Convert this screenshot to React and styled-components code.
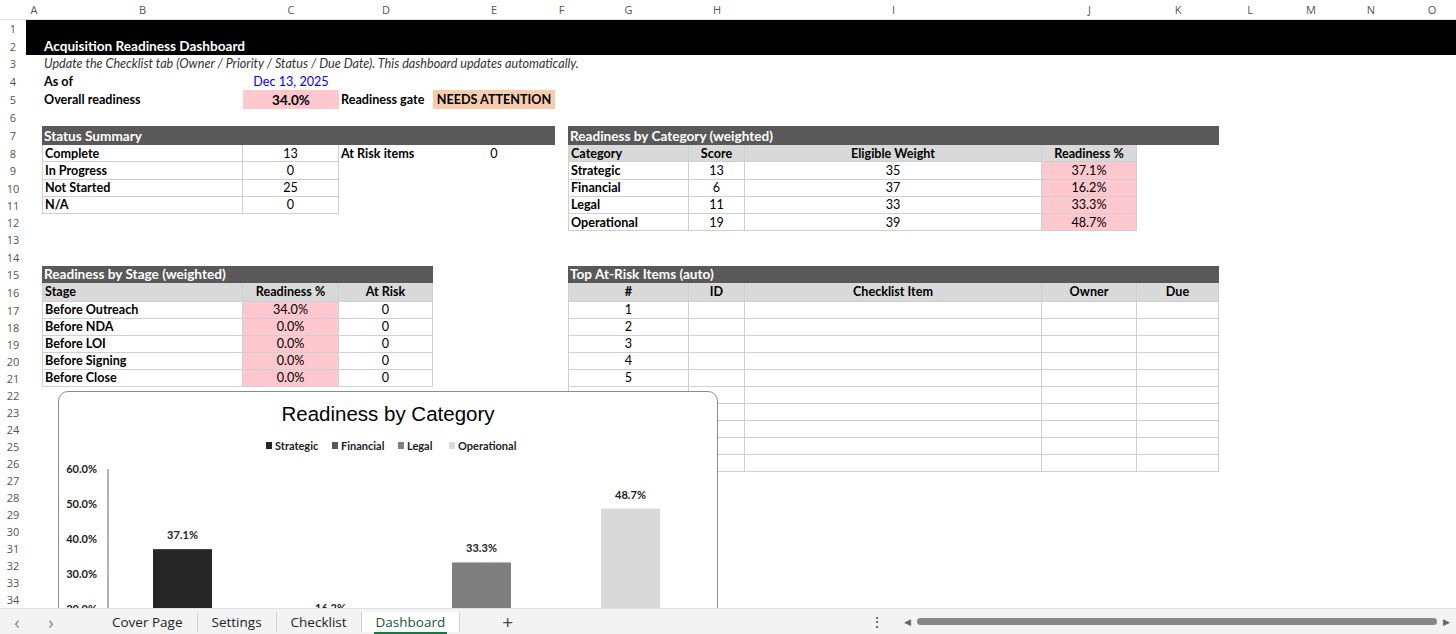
import React from "react";
import styled, { createGlobalStyle, css } from "styled-components";

const Global = createGlobalStyle`
  html, body { margin: 0; padding: 0; background: #fff; overflow: hidden; }
  body { font-family: Lato, "Open Sans", "Liberation Sans", sans-serif; }
`;

const COLS = [26, 16, 201, 96, 94, 122, 13, 121, 56, 297, 95, 82, 62, 60, 60, 62];
const ROWS = [20, 17.5, 17.5, 17.5, 17.5, 19, 17, 19, 17.25, 17.25, 17.25, 17.25, 17.25, 17.25, 17.25, 17.25, 18.5];
for (let i = 17; i <= 34; i++) ROWS.push(17);
const CI = { A: 2, B: 3, C: 4, D: 5, E: 6, F: 7, G: 8, H: 9, I: 10, J: 11, K: 12, L: 13, M: 14, N: 15, O: 16 };

const Page = styled.div`
  width: 1456px;
  height: 634px;
  display: flex;
  flex-direction: column;
  overflow: hidden;
`;
const SheetArea = styled.div`
  position: relative;
  height: 608px;
  overflow: hidden;
`;
const Grid = styled.div`
  display: grid;
  grid-template-columns: ${COLS.map((c) => c + "px").join(" ")};
  grid-template-rows: ${ROWS.map((r) => r + "px").join(" ")};
  font-size: 12.6px;
  color: #000;
`;

const Cell = styled.div`
  grid-column: ${(p) => p.$c} / span ${(p) => p.$span || 1};
  grid-row: ${(p) => p.$r};
  display: flex;
  align-items: center;
  justify-content: ${(p) => (p.$center ? "center" : "flex-start")};
  padding: 0 2px;
  white-space: nowrap;
  overflow: visible;
  font-weight: ${(p) => (p.$bold ? 700 : 400)};
  box-sizing: border-box;
  ${(p) => p.$italic && css`font-style: italic; color: #333;`}
  ${(p) => p.$color && css`color: ${p.$color};`}
  ${(p) => p.$big && css`font-size: 13.5px;`}
  ${(p) => p.$box && css`
    border-right: 1px solid #d0d0d0;
    border-bottom: 1px solid #d0d0d0;
  `}
  ${(p) => p.$first && css`border-left: 1px solid #d0d0d0;`}
  ${(p) => p.$bg && css`background: ${p.$bg};`}
`;
const ColHead = styled.div`
  grid-row: 1;
  grid-column: ${(p) => p.$c};
  display: flex;
  align-items: center;
  justify-content: center;
  color: #555;
  font-size: 11px;
  font-family: "Open Sans", sans-serif;
  border-bottom: 1px solid #e2e2e2;
  background: #fff;
`;
const RowHead = styled.div`
  grid-column: 1;
  grid-row: ${(p) => p.$r};
  display: flex;
  align-items: center;
  justify-content: center;
  color: #555;
  font-size: 11px;
  font-family: "Open Sans", sans-serif;
`;
const Band = styled.div`
  grid-column: 2 / -1;
  grid-row: 2 / span 2;
  background: #000;
`;
const Title = styled.div`
  grid-column: 3 / span 5;
  grid-row: 3;
  color: #fff;
  font-weight: 700;
  font-size: 13.6px;
  display: flex;
  align-items: center;
  padding-left: 2px;
  z-index: 1;
`;
const Section = styled.div`
  grid-column: ${(p) => p.$c} / span ${(p) => p.$span};
  grid-row: ${(p) => p.$r};
  background: #595959;
  color: #fff;
  font-weight: 700;
  font-size: 13.6px;
  display: flex;
  align-items: center;
  padding-left: 2px;
`;

const ChartBox = styled.div`
  position: absolute;
  left: 58px;
  top: 391px;
  width: 660px;
  height: 260px;
  background: #fff;
  border: 1px solid #8c8c8c;
  border-radius: 10px;
  box-sizing: border-box;
  overflow: hidden;
`;

const TabBar = styled.div`
  height: 26px;
  background: #f3f3f3;
  border-top: 1px solid #e0e0e0;
  display: flex;
  align-items: center;
  font-family: "Open Sans", sans-serif;
  font-size: 13.5px;
  color: #222;
  box-sizing: border-box;
`;
const Arrow = styled.span`
  color: #888;
  font-size: 18px;
  width: 34px;
  text-align: center;
`;
const Tab = styled.div`
  position: relative;
  padding: 0 14px;
  height: 20px;
  display: flex;
  align-items: center;
  border-right: 1px solid #d0d0d0;
  ${(p) => p.$active && css`
    background: #fff;
    color: #0f5c2e;
    &::after {
      content: "";
      position: absolute;
      left: 12px; right: 12px; bottom: -2px;
      height: 2px;
      background: #107c41;
    }
  `}
`;
const Plus = styled.span`
  margin-left: 42px;
  font-size: 19px;
  color: #444;
`;
const Right = styled.div`
  margin-left: auto;
  display: flex;
  align-items: center;
  gap: 6px;
  padding-right: 6px;
`;
const Dots = styled.span`
  color: #444;
  margin-right: 14px;
  font-size: 14px;
`;
const Track = styled.div`
  width: 520px;
  height: 8px;
  display: flex;
  align-items: center;
`;
const Thumb = styled.div`
  width: 100%;
  height: 7px;
  background: #878787;
  border-radius: 4px;
`;
const Tri = styled.span`
  color: #666;
  font-size: 9px;
`;

const cats = [
  ["Strategic", 13, 35, "37.1%"],
  ["Financial", 6, 37, "16.2%"],
  ["Legal", 11, 33, "33.3%"],
  ["Operational", 19, 39, "48.7%"],
];
const stages = ["Before Outreach", "Before NDA", "Before LOI", "Before Signing", "Before Close"];
const PINK = "#ffc7ce";
const GRAY = "#d9d9d9";
const r = (n) => n + 1;

function Chart() {
  const y0 = 77, step = 35;
  const yOf = (v) => y0 + (60 - v) * step / 10;
  const bars = [
    { x: 94, v: 37.1, c: "#262626" },
    { x: 242, v: 16.2, c: "#595959" },
    { x: 393, v: 33.3, c: "#7f7f7f" },
    { x: 542, v: 48.7, c: "#d9d9d9" },
  ];
  const legend = [
    { x: 207, t: "Strategic", c: "#262626" },
    { x: 273, t: "Financial", c: "#595959" },
    { x: 339, t: "Legal", c: "#7f7f7f" },
    { x: 390, t: "Operational", c: "#d9d9d9" },
  ];
  return (
    <ChartBox>
      <svg width="660" height="260" style={{ display: "block" }}>
        <text x="329" y="29" textAnchor="middle" fontFamily="Liberation Sans, Arial, sans-serif" fontSize="20.5" fill="#000">Readiness by Category</text>
        {legend.map((l) => (
          <g key={l.t}>
            <rect x={l.x} y={50} width="6" height="7" fill={l.c} />
            <text x={l.x + 9} y={57.5} fontFamily="Lato, sans-serif" fontWeight="700" fontSize="11" fill="#222">{l.t}</text>
          </g>
        ))}
        {[60, 50, 40, 30, 20].map((v) => (
          <text key={v} x="38" y={yOf(v) + 4} textAnchor="end" fontFamily="Lato, sans-serif" fontWeight="700" fontSize="11" fill="#222">{v.toFixed(1)}%</text>
        ))}
        <line x1="49" y1={y0} x2="49" y2="260" stroke="#7f7f7f" strokeWidth="1.2" />
        {bars.map((b) => (
          <g key={b.x}>
            <rect x={b.x} y={yOf(b.v)} width="59" height="200" fill={b.c} />
            <text x={b.x + 29.5} y={yOf(b.v) - 10} textAnchor="middle" fontFamily="Lato, sans-serif" fontWeight="700" fontSize="11" fill="#222">{b.v.toFixed(1)}%</text>
          </g>
        ))}
      </svg>
    </ChartBox>
  );
}

export default function App() {
  const letters = ["A", "B", "C", "D", "E", "F", "G", "H", "I", "J", "K", "L", "M", "N", "O"];
  return (
    <Page>
      <Global />
      <SheetArea>
        <Grid>
          <ColHead $c={1} />
          {letters.map((l) => <ColHead key={l} $c={CI[l]}>{l}</ColHead>)}
          {Array.from({ length: 34 }, (_, i) => <RowHead key={i} $r={i + 2}>{i + 1}</RowHead>)}
          <Band />
          <Title>Acquisition Readiness Dashboard</Title>
          <Cell $c={CI.B} $span={6} $r={r(3)} $italic>
            Update the Checklist tab (Owner / Priority / Status / Due Date). This dashboard updates automatically.
          </Cell>
          <Cell $c={CI.B} $r={r(4)} $bold>As of</Cell>
          <Cell $c={CI.C} $r={r(4)} $center $color="#0000ff">Dec 13, 2025</Cell>
          <Cell $c={CI.B} $r={r(5)} $bold>Overall readiness</Cell>
          <Cell $c={CI.C} $r={r(5)} $center $bold $big $bg={PINK}>34.0%</Cell>
          <Cell $c={CI.D} $r={r(5)} $bold>Readiness gate</Cell>
          <Cell $c={CI.E} $r={r(5)} $center $bold $bg="#f8cbad">NEEDS ATTENTION</Cell>

          <Section $c={CI.B} $span={4} $r={r(7)}>Status Summary</Section>
          {[["Complete", 13], ["In Progress", 0], ["Not Started", 25], ["N/A", 0]].map(([l, v], i) => (
            <React.Fragment key={l}>
              <Cell $c={CI.B} $r={r(8 + i)} $bold $box $first>{l}</Cell>
              <Cell $c={CI.C} $r={r(8 + i)} $center $box>{v}</Cell>
            </React.Fragment>
          ))}
          <Cell $c={CI.D} $r={r(8)} $bold>At Risk items</Cell>
          <Cell $c={CI.E} $r={r(8)} $center>0</Cell>

          <Section $c={CI.G} $span={5} $r={r(7)}>Readiness by Category (weighted)</Section>
          <Cell $c={CI.G} $r={r(8)} $bold $bg={GRAY} $box $first>Category</Cell>
          <Cell $c={CI.H} $r={r(8)} $bold $bg={GRAY} $box $center>Score</Cell>
          <Cell $c={CI.I} $r={r(8)} $bold $bg={GRAY} $box $center>Eligible Weight</Cell>
          <Cell $c={CI.J} $r={r(8)} $bold $bg={GRAY} $box $center>Readiness %</Cell>
          {cats.map(([n, s, w, p], i) => (
            <React.Fragment key={n}>
              <Cell $c={CI.G} $r={r(9 + i)} $bold $box $first>{n}</Cell>
              <Cell $c={CI.H} $r={r(9 + i)} $center $box>{s}</Cell>
              <Cell $c={CI.I} $r={r(9 + i)} $center $box>{w}</Cell>
              <Cell $c={CI.J} $r={r(9 + i)} $center $box $bg={PINK}>{p}</Cell>
            </React.Fragment>
          ))}

          <Section $c={CI.B} $span={3} $r={r(15)}>Readiness by Stage (weighted)</Section>
          <Cell $c={CI.B} $r={r(16)} $bold $bg={GRAY} $box $first>Stage</Cell>
          <Cell $c={CI.C} $r={r(16)} $bold $bg={GRAY} $box $center>Readiness %</Cell>
          <Cell $c={CI.D} $r={r(16)} $bold $bg={GRAY} $box $center>At Risk</Cell>
          {stages.map((s, i) => (
            <React.Fragment key={s}>
              <Cell $c={CI.B} $r={r(17 + i)} $bold $box $first>{s}</Cell>
              <Cell $c={CI.C} $r={r(17 + i)} $center $box $bg={PINK}>{i === 0 ? "34.0%" : "0.0%"}</Cell>
              <Cell $c={CI.D} $r={r(17 + i)} $center $box>0</Cell>
            </React.Fragment>
          ))}

          <Section $c={CI.G} $span={5} $r={r(15)}>Top At-Risk Items (auto)</Section>
          {[["G", "#"], ["H", "ID"], ["I", "Checklist Item"], ["J", "Owner"], ["K", "Due"]].map(([c, t]) => (
            <Cell key={c} $c={CI[c]} $r={r(16)} $bold $bg={GRAY} $box $center $first={c === "G"}>{t}</Cell>
          ))}
          {Array.from({ length: 10 }, (_, i) => (
            <React.Fragment key={i}>
              {["G", "H", "I", "J", "K"].map((c) => (
                <Cell key={c} $c={CI[c]} $r={r(17 + i)} $box $center $first={c === "G"}>
                  {c === "G" && i < 5 ? i + 1 : ""}
                </Cell>
              ))}
            </React.Fragment>
          ))}
        </Grid>
        <Chart />
      </SheetArea>
      <TabBar>
        <Arrow>‹</Arrow>
        <Arrow>›</Arrow>
        <div style={{ width: 30 }} />
        <Tab>Cover Page</Tab>
        <Tab>Settings</Tab>
        <Tab>Checklist</Tab>
        <Tab $active>Dashboard</Tab>
        <Plus>+</Plus>
        <Right>
          <Dots>⋮</Dots>
          <Tri>◀</Tri>
          <Track><Thumb /></Track>
          <Tri>▶</Tri>
        </Right>
      </TabBar>
    </Page>
  );
}
